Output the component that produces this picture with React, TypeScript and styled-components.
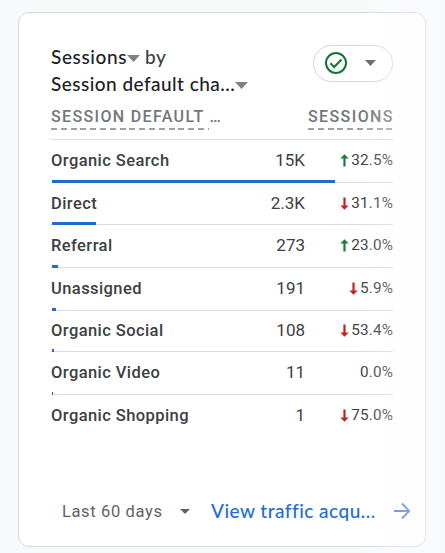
import React from "react";
import styled, { createGlobalStyle } from "styled-components";

const Global = createGlobalStyle`
  *, *::before, *::after { box-sizing: border-box; }
  body { margin: 0; background: #f8f9fb; font-family: Roboto, "Liberation Sans", sans-serif; color: #3c4043; }
`;

const Page = styled.main`
  position: relative;
  width: 445px;
  height: 553px;
  padding: 12px 19px 6px 18px;
  overflow: hidden;
`;

const Card = styled.section`
  display: flex;
  flex-direction: column;
  height: 535px;
  padding: 31px 32px 0;
  background: #fff;
  border: 1px solid #d6d9dd;
  border-radius: 11px;
`;

const EdgeFade = styled.div`
  position: absolute;
  top: 0;
  right: 0;
  bottom: 0;
  width: 85px;
  pointer-events: none;
  background: linear-gradient(to right, rgba(252, 252, 253, 0), rgba(252, 252, 253, 0.25) 35%, rgba(251, 251, 252, 0.45) 75%, rgba(248, 249, 251, 0.5));
`;

const Header = styled.header`
  display: flex;
  justify-content: space-between;
  height: 62px;
`;

const Title = styled.h2`
  margin: -1px 0 0;
  font: 500 19px/27px Lato, sans-serif;
  color: #202124;
`;

const TitleLine = styled.div<{ $spacing: number }>`
  display: flex;
  align-items: center;
  height: 27px;
  letter-spacing: ${(p) => p.$spacing}px;
  white-space: pre;
`;

const By = styled.span`
  margin-left: 5px;
  color: #3c4043;
`;

const Caret = styled.svg<{ $w: number; $h: number; $drop: number }>`
  display: block;
  flex: none;
  width: ${(p) => p.$w}px;
  height: ${(p) => p.$h}px;
  margin-top: ${(p) => p.$drop}px;
`;

const StatusButton = styled.button`
  display: flex;
  align-items: center;
  width: 80px;
  height: 37px;
  margin: 1px 0 0;
  padding: 0 0 2px 10px;
  gap: 17px;
  background: transparent;
  border: 1px solid #d3d5d9;
  border-radius: 19px;
`;

const Columns = styled.div`
  display: flex;
  justify-content: space-between;
  height: 34px;
  border-bottom: 1px solid #dadce0;
`;

const ColumnLabel = styled.div<{ $width: number; $dash: number; $spacing: number }>`
  width: ${(p) => p.$width}px;
  height: 24px;
  font-size: 16px;
  font-weight: 500;
  line-height: 22px;
  letter-spacing: ${(p) => p.$spacing}px;
  color: #73767a;
  white-space: nowrap;
  background: repeating-linear-gradient(to right, #a0a0a0 0 6px, transparent 6px 9.8px) 0 22px / ${(p) => p.$dash}px 2px no-repeat;
`;

const Row = styled.div<{ $height: number; $last: boolean }>`
  position: relative;
  display: grid;
  grid-template-columns: 1fr 76px 88px;
  height: ${(p) => p.$height}px;
  border-bottom: 1px solid ${(p) => (p.$last ? "transparent" : "#dadce0")};
  line-height: ${(p) => (p.$height === 41 ? 39 : 41)}px;
`;

const Name = styled.span`
  font-size: 16.5px;
  font-weight: 500;
  letter-spacing: 0.42px;
`;

const Value = styled.span`
  font-size: 17px;
  text-align: right;
`;

const Change = styled.span`
  display: flex;
  align-items: center;
  justify-content: flex-end;
  gap: 2px;
  height: 1lh;
  font-size: 15.3px;
  letter-spacing: 0.15px;
`;

const Bar = styled.i<{ $width: number }>`
  position: absolute;
  left: 1px;
  bottom: -1px;
  width: ${(p) => p.$width}px;
  height: 3px;
  background: #216bd0;
`;

const Footer = styled.footer`
  display: flex;
  align-items: center;
  height: 40px;
  margin: auto -20px 15px 11px;
`;

const Period = styled.span`
  width: 118px;
  font-size: 16.5px;
  letter-spacing: 0.63px;
  color: #5f6368;
`;

const ReportLink = styled.a`
  width: 182px;
  margin-left: 21px;
  font: 500 19px/24px Lato, sans-serif;
  letter-spacing: 0.48px;
  color: #1d6cda;
  white-space: nowrap;
`;

const Down = ({ w, h, color, drop = 0 }: { w: number; h: number; color: string; drop?: number }) => (
  <Caret $w={w} $h={h} $drop={drop} viewBox="0 0 12 6" preserveAspectRatio="none">
    <path d="M0 0h12L6 6z" fill={color} />
  </Caret>
);

const Trend = ({ up }: { up: boolean }) => (
  <svg width="9" height="13" viewBox="0 0 9 13">
    <path
      d="M3.4 12.5V4.4H.3L4.5.2l4.2 4.2H5.6v8.1z"
      fill={up ? "#188038" : "#c5221f"}
      transform={up ? undefined : "rotate(180 4.5 6.5)"}
    />
  </svg>
);

type Channel = {
  name: string;
  value: string;
  change: string;
  up?: boolean;
  bar: number;
  height: number;
};

const channels: Channel[] = [
  { name: "Organic Search", value: "15K", change: "32.5%", up: true, bar: 283, height: 43 },
  { name: "Direct", value: "2.3K", change: "31.1%", up: false, bar: 44, height: 42 },
  { name: "Referral", value: "273", change: "23.0%", up: true, bar: 6, height: 43 },
  { name: "Unassigned", value: "191", change: "5.9%", up: false, bar: 4, height: 43 },
  { name: "Organic Social", value: "108", change: "53.4%", up: false, bar: 2, height: 41 },
  { name: "Organic Video", value: "11", change: "0.0%", bar: 1, height: 43 },
  { name: "Organic Shopping", value: "1", change: "75.0%", up: false, bar: 0, height: 42 },
];

export default function App() {
  return (
    <Page>
      <Global />
      <Card>
        <Header>
          <Title>
            <TitleLine $spacing={0.6}>
              Sessions
              <Down w={13} h={7} color="#808080" drop={3} />
              <By>by</By>
            </TitleLine>
            <TitleLine $spacing={0.46}>
              Session default cha...
              <Down w={13} h={7} color="#808080" drop={3} />
            </TitleLine>
          </Title>
          <StatusButton aria-label="Data quality">
            <svg width="24" height="24" viewBox="0 0 24 24" fill="none" stroke="#137333" strokeWidth="2">
              <circle cx="12" cy="12" r="10" />
              <path d="M6.5 12.3l3.7 3.7 7.3-7.5" />
            </svg>
            <Down w={11} h={6} color="#5f6368" />
          </StatusButton>
        </Header>
        <Columns>
          <ColumnLabel $width={172} $dash={158} $spacing={1.35}>SESSION DEFAULT …</ColumnLabel>
          <ColumnLabel $width={85} $dash={85} $spacing={1.4}>SESSIONS</ColumnLabel>
        </Columns>
        {channels.map((c, i) => (
          <Row key={c.name} $height={c.height} $last={i === channels.length - 1}>
            <Name>{c.name}</Name>
            <Value>{c.value}</Value>
            <Change>
              {c.up !== undefined && <Trend up={c.up} />}
              {c.change}
            </Change>
            {c.bar > 0 && <Bar $width={c.bar} />}
          </Row>
        ))}
        <Footer>
          <Period>Last 60 days</Period>
          <Down w={10} h={5} color="#5f6368" />
          <ReportLink>View traffic acqu...</ReportLink>
          <svg width="18" height="18" viewBox="0 0 18 18" fill="none" stroke="#3f73dc" strokeWidth="1.8">
            <path d="M1 9h15M9 1.5L16.3 9 9 16.5" />
          </svg>
        </Footer>
      </Card>
      <EdgeFade />
    </Page>
  );
}
